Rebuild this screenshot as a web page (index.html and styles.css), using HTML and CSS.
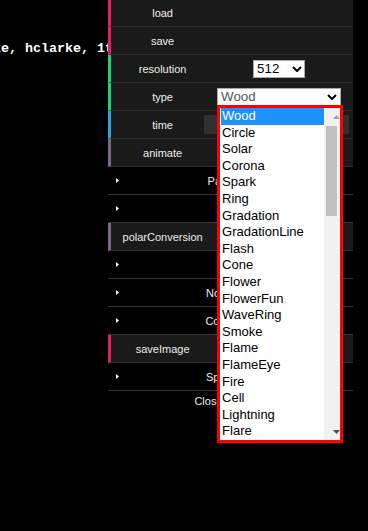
FILE: index.html
```html
<!DOCTYPE html>
<html lang="en">
<head>
  <meta charset="UTF-8" />
  <meta name="viewport" content="width=device-width, initial-scale=1.0" />
  <title>Shader Controls</title>
  <link rel="stylesheet" href="styles.css">
</head>
<body>
  <div class="page">
    <div class="credits">
      <p class="credits-line">Thanks: mike, hclarke, 1ttt and everyone</p>
    </div>

    <div class="dg">
      <ul class="dg-list">
        <li class="cr function"><span class="property-name">load</span><div class="c"></div></li>
        <li class="cr function"><span class="property-name">save</span><div class="c"></div></li>
        <li class="cr string">
          <span class="property-name">resolution</span>
          <div class="c">
            <div class="select select-res">
              <span>512</span>
              <svg width="10" height="6" viewBox="0 0 10 6"><path d="M1 1l4 4 4-4" fill="none" stroke="#000" stroke-width="2"/></svg>
            </div>
          </div>
        </li>
        <li class="cr string">
          <span class="property-name">type</span>
          <div class="c">
            <div class="select select-type">
              <span>Wood</span>
              <svg width="10" height="6" viewBox="0 0 10 6"><path d="M1 1l4 4 4-4" fill="none" stroke="#000" stroke-width="2"/></svg>

              <div class="popup">
                <ul class="options">
                  <li class="selected">Wood</li>
                  <li>Circle</li>
                  <li>Solar</li>
                  <li>Corona</li>
                  <li>Spark</li>
                  <li>Ring</li>
                  <li>Gradation</li>
                  <li>GradationLine</li>
                  <li>Flash</li>
                  <li>Cone</li>
                  <li>Flower</li>
                  <li>FlowerFun</li>
                  <li>WaveRing</li>
                  <li>Smoke</li>
                  <li>Flame</li>
                  <li>FlameEye</li>
                  <li>Fire</li>
                  <li>Cell</li>
                  <li>Lightning</li>
                  <li>Flare</li>
                </ul>
                <div class="scrollbar">
                  <div class="scroll-btn">
                    <svg width="7" height="4" viewBox="0 0 7 4"><path d="M0 4h7L3.5 0z" fill="#a3a3a3"/></svg>
                  </div>
                  <div class="thumb"></div>
                  <div class="scroll-track"></div>
                  <div class="scroll-btn">
                    <svg width="7" height="4" viewBox="0 0 7 4"><path d="M0 0h7L3.5 4z" fill="#505050"/></svg>
                  </div>
                </div>
              </div>
            </div>
          </div>
        </li>
        <li class="cr number">
          <span class="property-name">time</span>
          <div class="c">
            <div class="slider"></div>
            <input class="num" type="text" value="0">
          </div>
        </li>
        <li class="cr boolean">
          <span class="property-name">animate</span>
          <div class="c"><input class="check" type="checkbox"></div>
        </li>

        <li class="title">
          <svg width="3" height="5" viewBox="0 0 3 5"><path d="M0 0l3 2.5L0 5z" fill="#fff"/></svg>
          <span class="title-text">Parameters</span>
        </li>
        <li class="title">
          <svg width="3" height="5" viewBox="0 0 3 5"><path d="M0 0l3 2.5L0 5z" fill="#fff"/></svg>
          <span class="title-text">Noise</span>
        </li>
        <li class="cr boolean">
          <span class="property-name">polarConversion</span>
          <div class="c"><input class="check" type="checkbox"></div>
        </li>
        <li class="title">
          <svg width="3" height="5" viewBox="0 0 3 5"><path d="M0 0l3 2.5L0 5z" fill="#fff"/></svg>
          <span class="title-text">Light</span>
        </li>
        <li class="title">
          <svg width="3" height="5" viewBox="0 0 3 5"><path d="M0 0l3 2.5L0 5z" fill="#fff"/></svg>
          <span class="title-text">Normal Map</span>
        </li>
        <li class="title">
          <svg width="3" height="5" viewBox="0 0 3 5"><path d="M0 0l3 2.5L0 5z" fill="#fff"/></svg>
          <span class="title-text">Composition</span>
        </li>
        <li class="cr function"><span class="property-name">saveImage</span><div class="c"></div></li>
        <li class="title">
          <svg width="3" height="5" viewBox="0 0 3 5"><path d="M0 0l3 2.5L0 5z" fill="#fff"/></svg>
          <span class="title-text">Sphere Map</span>
        </li>
      </ul>
      <div class="close-button">Close Controls</div>
    </div>
  </div>
</body>
</html>
```

FILE: styles.css
```css
* {
  box-sizing: border-box;
}

body {
  margin: 0;
  background: #000;
  color: #eee;
  font-family: "Liberation Sans", Arial, sans-serif;
  text-align: center;
  overflow: hidden;
}

.page {
  display: flex;
  height: 100vh;
}

.credits {
  flex: 1;
  min-width: 0;
  overflow: hidden;
  padding-top: 41px;
}

.credits-line {
  margin: 0;
  white-space: nowrap;
  text-align: left;
  text-indent: -87px;
  font: bold 13.33px "Liberation Mono", monospace;
  color: #fff;
}

/* gui panel */
.dg {
  width: 245px;
  margin: -1px 15px 0 0;
  font-size: 11px;
}

.dg-list {
  list-style: none;
  margin: 0;
  padding: 0;
}

.cr {
  display: flex;
  height: 28px;
  line-height: 27px;
  padding: 0 4px 0 5px;
  background: #1a1a1a;
  border-bottom: 1px solid #2c2c2c;
  border-left: 3px solid #1a1a1a;
}

.cr.function { border-left-color: #e61d5f; }
.cr.string   { border-left-color: #1ed36f; }
.cr.number   { border-left-color: #2fa1d6; }
.cr.boolean  { border-left-color: #806787; }

.property-name {
  width: 40%;
  padding-top: 1px;
  overflow: hidden;
  white-space: nowrap;
  text-overflow: ellipsis;
}

.c {
  width: 60%;
  display: flex;
  justify-content: center;
  align-items: flex-start;
}

/* select boxes */
.select {
  position: relative;
  display: flex;
  align-items: center;
  height: 18px;
  margin-top: 5px;
  padding: 0 2px 0 3px;
  border: 1px solid #a9a9a9;
  background: #fff;
  color: #000;
  font-size: 13.33px;
  line-height: 16px;
  text-align: left;
}

.select svg {
  margin-left: auto;
}

.select-res {
  width: 52px;
}

.select-type {
  width: 124px;
  padding-right: 3px;
  color: #555;
}

/* open option list */
.popup {
  position: absolute;
  top: 16px;
  left: -1px;
  z-index: 10;
  display: flex;
  width: 126px;
  height: 338px;
  border: 3px solid #f00;
  background: #fff;
  color: #000;
  font-size: 13px;
}

.options {
  flex: 1;
  margin: 0;
  padding: 0 0 0 1px;
  list-style: none;
}

.options li {
  height: 16.6px;
  line-height: 16.6px;
  padding-left: 1px;
  white-space: nowrap;
}

.options .selected {
  background: #1e90ff;
  color: #fff;
}

.scrollbar {
  width: 16px;
  display: flex;
  flex-direction: column;
  background: #f1f1f1;
}

.scroll-btn {
  height: 17px;
  display: flex;
  align-items: center;
  justify-content: center;
}

.thumb {
  height: 90px;
  margin: 1px 3px 0 2px;
  background: #c1c1c1;
}

.scroll-track {
  flex: 1;
}

/* number slider */
.slider {
  width: 66%;
  height: 19px;
  margin: 4px 0 0 -5px;
  background: #303030;
}

.num {
  width: 30%;
  height: 19px;
  margin: 4px 0 0 auto;
  padding: 0 3px;
  border: 0;
  outline: none;
  background: #303030;
  color: #2fa1d6;
  font: 11px "Liberation Sans", Arial, sans-serif;
}

.check {
  margin: 7px 0 0;
}

/* folder titles */
.title {
  display: flex;
  align-items: center;
  height: 28px;
  padding-left: 8px;
  background: #000;
  border-bottom: 1px solid rgba(255, 255, 255, 0.2);
}

.title-text {
  flex: 1;
  padding-top: 1px;
  line-height: 27px;
}

.close-button {
  height: 20px;
  line-height: 21px;
  background: #000;
}
```
